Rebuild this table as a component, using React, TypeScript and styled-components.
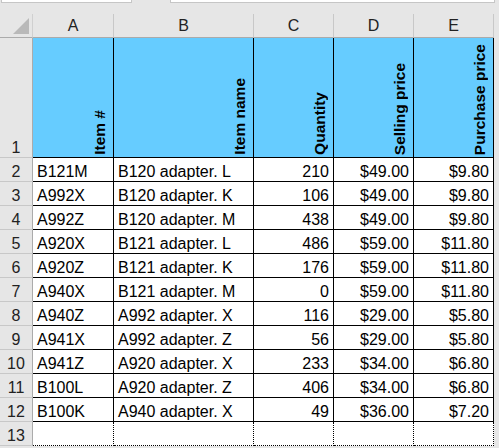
import React from "react";
import styled, { createGlobalStyle } from "styled-components";

const GlobalStyle = createGlobalStyle`
  html, body {
    margin: 0;
    padding: 0;
    background: #e6e6e6;
  }
  * {
    box-sizing: border-box;
  }
`;

const Window = styled.div`
  width: 499px;
  height: 448px;
  overflow: hidden;
  background: #e6e6e6;
  font-family: "Liberation Sans", Arial, sans-serif;
  color: #1a1a1a;
  display: flex;
  flex-direction: column;
`;

const FormulaStrip = styled.div`
  height: 14px;
  display: flex;
  align-items: flex-start;
  padding-left: 1px;
`;

const StripBox = styled.div<{ $width?: number }>`
  height: 3px;
  background: #ffffff;
  border-bottom: 1px solid #c6c6c6;
  border-left: 1px solid #c6c6c6;
  border-right: 1px solid #c6c6c6;
  width: ${(p) => (p.$width ? `${p.$width}px` : "auto")};
  flex: ${(p) => (p.$width ? "none" : "1")};
  margin-right: ${(p) => (p.$width ? "38px" : "4px")};
`;

const Sheet = styled.div`
  display: grid;
  grid-template-columns: 33px 81px 140px 80px 80px 80px;
  grid-template-rows: 24px 120px repeat(12, 24px);
  font-size: 16px;
`;

const Corner = styled.div`
  display: flex;
  align-items: flex-end;
  justify-content: flex-end;
  padding: 0 3px 3px 0;
  border-right: 1px solid #d0d0d0;
  border-bottom: 1px solid #ababab;
`;

const ColHeader = styled.div`
  display: flex;
  align-items: center;
  justify-content: center;
  border-right: 1px solid #c8c8c8;
  border-bottom: 1px solid #ababab;
  color: #222;
  padding-top: 1px;
`;

const RowHeader = styled.div`
  display: flex;
  align-items: flex-end;
  justify-content: center;
  line-height: 18px;
  border-right: 1px solid #ababab;
  border-bottom: 1px solid #c8c8c8;
  color: #222;
`;

const TitleCell = styled.div`
  display: flex;
  align-items: flex-end;
  justify-content: flex-end;
  background: #66ccff;
  border-right: 1px solid #000;
  border-bottom: 1px solid #000;
  padding: 0 4px 2px 0;
`;

const TitleText = styled.span`
  writing-mode: vertical-rl;
  transform: rotate(180deg);
  font-weight: bold;
  font-size: 15.5px;
  line-height: 18px;
  color: #000;
  white-space: nowrap;
`;

const DataCell = styled.div<{ $right?: boolean; $dotted?: boolean }>`
  display: flex;
  align-items: flex-end;
  justify-content: ${(p) => (p.$right ? "flex-end" : "flex-start")};
  background: #ffffff;
  line-height: 18px;
  padding: 0 4px;
  white-space: nowrap;
  color: #000;
  border-right: 1px ${(p) => (p.$dotted ? "dotted" : "solid")} #000;
  border-bottom: 1px ${(p) => (p.$dotted ? "dotted" : "solid")} #000;
`;

const columns = ["A", "B", "C", "D", "E"];
const titles = ["Item #", "Item name", "Quantity", "Selling price", "Purchase price"];

const rows: [string, string, number, string, string][] = [
  ["B121M", "B120 adapter. L", 210, "$49.00", "$9.80"],
  ["A992X", "B120 adapter. K", 106, "$49.00", "$9.80"],
  ["A992Z", "B120 adapter. M", 438, "$49.00", "$9.80"],
  ["A920X", "B121 adapter. L", 486, "$59.00", "$11.80"],
  ["A920Z", "B121 adapter. K", 176, "$59.00", "$11.80"],
  ["A940X", "B121 adapter. M", 0, "$59.00", "$11.80"],
  ["A940Z", "A992 adapter. X", 116, "$29.00", "$5.80"],
  ["A941X", "A992 adapter. Z", 56, "$29.00", "$5.80"],
  ["A941Z", "A920 adapter. X", 233, "$34.00", "$6.80"],
  ["B100L", "A920 adapter. Z", 406, "$34.00", "$6.80"],
  ["B100K", "A940 adapter. X", 49, "$36.00", "$7.20"],
];

const SelectAll = () => (
  <svg width="16" height="16" viewBox="0 0 16 16">
    <polygon points="16,0 16,16 0,16" fill="#b9b9b9" />
  </svg>
);

export default function App() {
  return (
    <Window>
      <GlobalStyle />
      <FormulaStrip>
        <StripBox $width={131} />
        <StripBox />
      </FormulaStrip>
      <Sheet>
        <Corner>
          <SelectAll />
        </Corner>
        {columns.map((c) => (
          <ColHeader key={c}>{c}</ColHeader>
        ))}

        <RowHeader>1</RowHeader>
        {titles.map((t) => (
          <TitleCell key={t}>
            <TitleText>{t}</TitleText>
          </TitleCell>
        ))}

        {rows.map((r, i) => (
          <React.Fragment key={r[0]}>
            <RowHeader>{i + 2}</RowHeader>
            <DataCell>{r[0]}</DataCell>
            <DataCell>{r[1]}</DataCell>
            <DataCell $right>{r[2]}</DataCell>
            <DataCell $right>{r[3]}</DataCell>
            <DataCell $right>{r[4]}</DataCell>
          </React.Fragment>
        ))}

        <RowHeader>13</RowHeader>
        {columns.map((c) => (
          <DataCell key={c} $dotted />
        ))}
      </Sheet>
    </Window>
  );
}
